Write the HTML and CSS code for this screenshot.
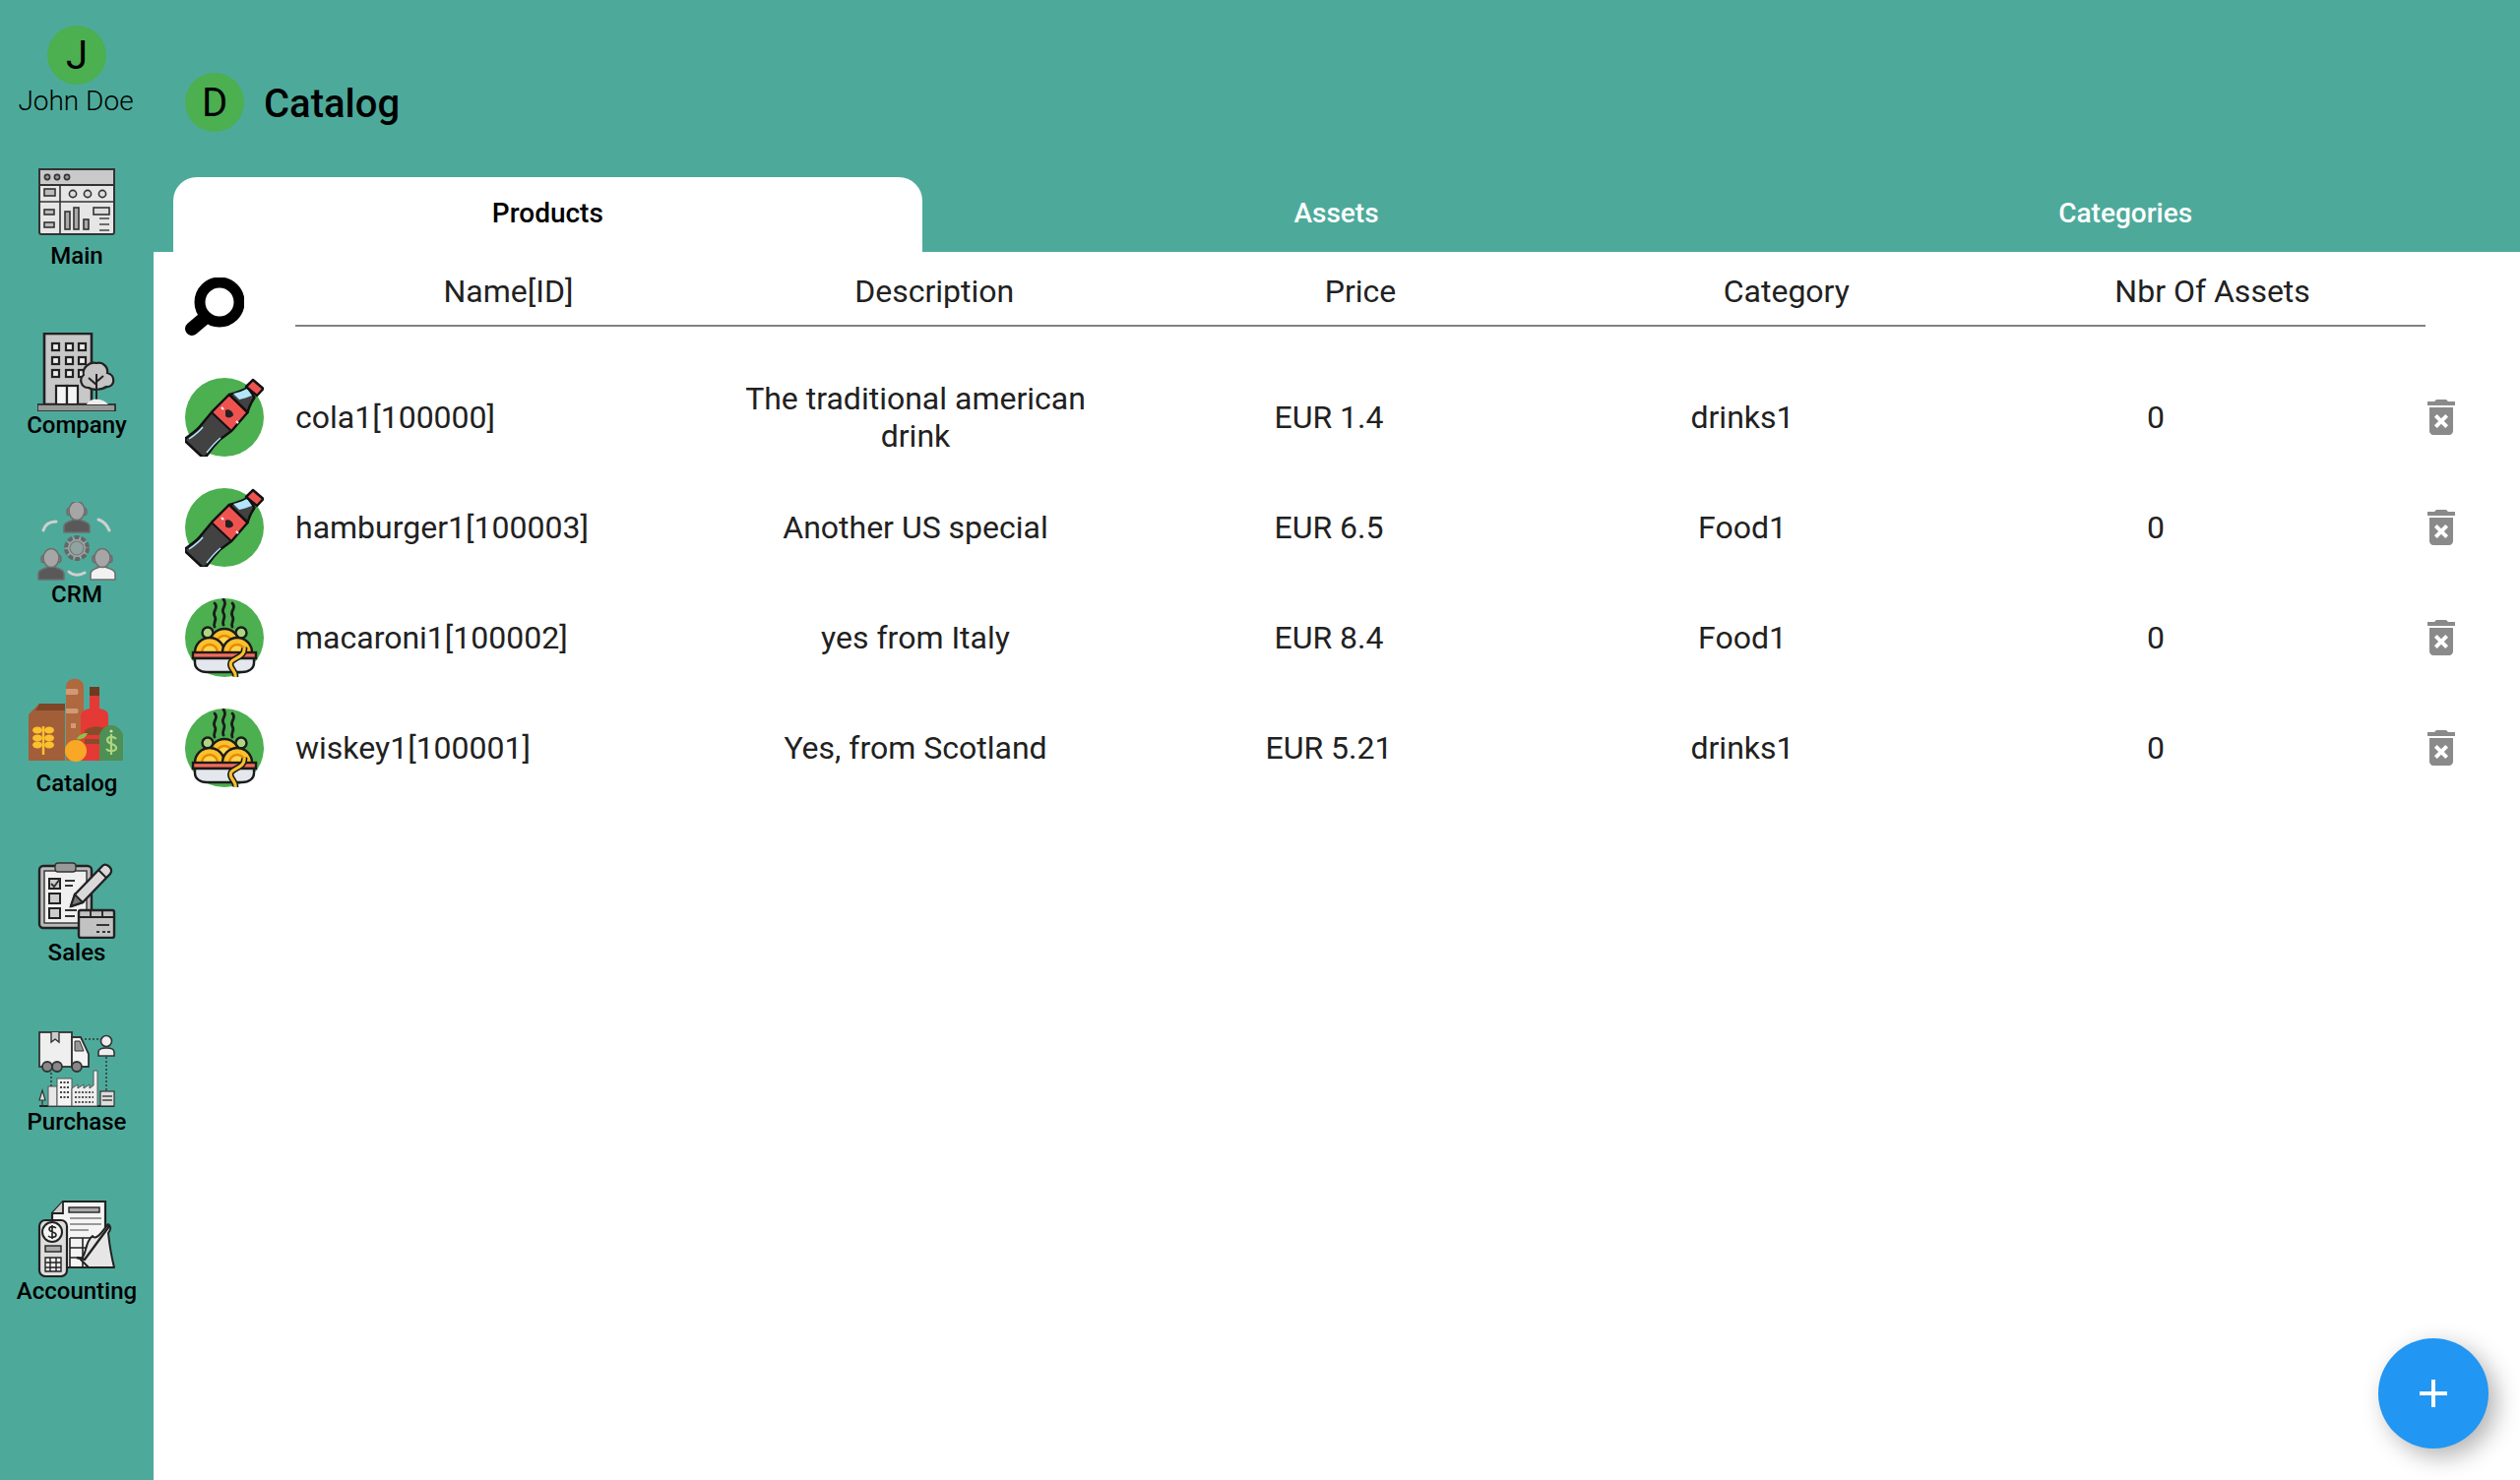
FILE: index.html
```html
<!DOCTYPE html>
<html>

<head>
	<title>Catalog</title>
	<meta charset="UTF-8">
	<link rel="stylesheet" href="styles.css">
</head>

<body>
	<svg class="defs" width="0" height="0">
		<symbol id="bottle" viewBox="0 0 80 80">
			<circle cx="40" cy="40" r="40" fill="#4caf50" />
			<path d="M1 61 C8 56 13 53 17 47 L27 35 L45 17 L63.5 35 L47 54 L35 63 C30 68 26 73 22 79 C20 81 18 81 16 79 L1 65 C0 64 0 62 1 61 Z" fill="#424242" stroke="#111" stroke-width="2.5" stroke-linejoin="round" />
			<path d="M4 62 C10 58 14 55 18 50 M22 76 C26 71 30 66 36 61" stroke="#b3e5fc" stroke-width="1.5" fill="none" />
			<path d="M27 35 L45 17 L63.5 35 L47 54 Z" fill="#ef5350" stroke="#111" stroke-width="2" stroke-linejoin="round" />
			<path d="M45 17 C52 15 58 13 63.5 10 L70.5 20 C67 25 65 30 63.5 35 Z" fill="#424242" stroke="#111" stroke-width="2.5" stroke-linejoin="round" />
			<path d="M49 16 C54 15 59 13 63 11 L68 18 C63 20 59 21 55 22 Z" fill="#b3e5fc" />
			<path d="M62 9 L69 2 L79.5 11 L73 18 Z" fill="#ef5350" stroke="#111" stroke-width="2.5" stroke-linejoin="round" />
			<path d="M41 33 C44 31 49 34 49 38 C47 41 43 41 41 39 Z" fill="#222" />
			<path d="M37 30 L39 32 M52 44 L54 46" stroke="#fff" stroke-width="2" />
		</symbol>
		<symbol id="noodles" viewBox="0 0 80 80">
			<circle cx="40" cy="40" r="40" fill="#4caf50" />
			<g fill="none" stroke="#1b1b1b" stroke-width="2.8" stroke-linecap="round">
				<path d="M30 5 C35 10 27 13 30 18 C33 22 28 25 30 29" />
				<path d="M39 1 C44 7 36 10 39 15 C42 19 37 23 39 27" />
				<path d="M48 5 C53 10 45 13 48 18 C51 22 46 25 48 29" />
			</g>
			<circle cx="23" cy="35" r="5.5" fill="#aed581" stroke="#1b1b1b" stroke-width="2.4" />
			<circle cx="57" cy="35" r="5.5" fill="#aed581" stroke="#1b1b1b" stroke-width="2.4" />
			<circle cx="40" cy="46" r="15" fill="#fbc02d" stroke="#1b1b1b" stroke-width="2.4" />
			<circle cx="40" cy="46" r="8" fill="#ffd54f" stroke="#e68a00" stroke-width="2.4" />
			<circle cx="25" cy="55" r="15" fill="#fbc02d" stroke="#1b1b1b" stroke-width="2.4" />
			<circle cx="25" cy="55" r="8" fill="#ffd54f" stroke="#e68a00" stroke-width="2.4" />
			<circle cx="53" cy="55" r="15" fill="#fbc02d" stroke="#1b1b1b" stroke-width="2.4" />
			<circle cx="53" cy="55" r="8" fill="#ffd54f" stroke="#e68a00" stroke-width="2.4" />
			<rect x="8" y="55" width="64" height="6" fill="#f26b5b" stroke="#1b1b1b" stroke-width="2.4" />
			<path d="M10 61 H70 V66 C70 71 65 75 58 75 H22 C15 75 10 71 10 66 Z" fill="#e4e8ee" stroke="#1b1b1b" stroke-width="2.4" />
			<path d="M60 50 C62 62 42 60 47 70 C49 74 52 76 51 80" fill="none" stroke="#1b1b1b" stroke-width="6.4" />
			<path d="M60 50 C62 62 42 60 47 70 C49 74 52 76 51 80" fill="none" stroke="#fbc02d" stroke-width="3.2" />
		</symbol>
		<symbol id="trash" viewBox="0 0 24 24">
			<path fill="#8a8a8a" d="M6 19c0 1.1.9 2 2 2h8c1.1 0 2-.9 2-2V7H6v12zm2.46-7.12l1.41-1.41L12 12.59l2.12-2.12 1.41 1.41L13.41 14l2.12 2.12-1.41 1.41L12 15.41l-2.12 2.12-1.41-1.41L10.59 14l-2.13-2.12zM15.5 4l-1-1h-5l-1 1H5v2h14V4z" />
		</symbol>
	</svg>

	<div class="app">
		<div class="sidebar">
			<div class="user">
				<div class="avatar">J</div>
				<div class="user-name">John Doe</div>
			</div>
			<div class="nav">
				<div class="nav-item">
					<svg class="nav-icon" viewBox="0 0 80 80">
						<rect x="2" y="6" width="76" height="66" rx="2" fill="#e6e6e6" stroke="#333" stroke-width="2" />
						<rect x="2" y="6" width="76" height="16" fill="#c9c9c9" stroke="#333" stroke-width="2" />
						<g fill="#999" stroke="#333" stroke-width="1.6">
							<circle cx="10" cy="14" r="2.6" /><circle cx="20" cy="14" r="2.6" /><circle cx="30" cy="14" r="2.6" />
							<circle cx="36" cy="31" r="3.6" fill="#ddd" /><circle cx="51" cy="31" r="3.6" fill="#ddd" /><circle cx="66" cy="31" r="3.6" fill="#ddd" />
							<rect x="7" y="26" width="11" height="7" fill="#bbb" />
							<rect x="7" y="47" width="10" height="5" fill="#bbb" />
							<rect x="7" y="60" width="10" height="5" fill="#bbb" />
							<rect x="28" y="49" width="5" height="18" fill="#aaa" />
							<rect x="37" y="45" width="5" height="22" fill="#aaa" />
							<rect x="47" y="57" width="5" height="10" fill="#aaa" />
							<rect x="57" y="45" width="16" height="7" fill="#ddd" />
						</g>
						<path d="M23 22 V72 M2 39 H78" stroke="#333" stroke-width="1.6" fill="none" />
						<path d="M63 56 H73 M63 62 H73 M63 68 H73" stroke="#444" stroke-width="1.6" />
					</svg>
					<div class="nav-label">Main</div>
				</div>
				<div class="nav-item">
					<svg class="nav-icon" viewBox="0 0 80 80">
						<rect x="7" y="1" width="48" height="72" fill="#c8c8c8" stroke="#222" stroke-width="2.6" />
						<g fill="#eee" stroke="#222" stroke-width="2.2">
							<rect x="15" y="11" width="7" height="7" /><rect x="29" y="11" width="7" height="7" /><rect x="42" y="11" width="7" height="7" />
							<rect x="15" y="25" width="7" height="7" /><rect x="29" y="25" width="7" height="7" /><rect x="42" y="25" width="7" height="7" />
							<rect x="15" y="38" width="7" height="7" /><rect x="29" y="38" width="7" height="7" /><rect x="42" y="38" width="7" height="7" />
							<rect x="19" y="54" width="11" height="19" fill="#f4f4f4" /><rect x="30" y="54" width="11" height="19" fill="#f4f4f4" />
						</g>
						<path d="M52 56 C44 56 42 47 47 43 C45 36 53 29 60 31 C67 29 72 36 71 41 C80 43 79 56 70 55 C66 58 56 59 52 56 Z" fill="#c4c4c4" stroke="#222" stroke-width="2.2" />
						<path d="M60 70 V42 M60 53 L52 46 M60 50 L67 44" fill="none" stroke="#222" stroke-width="2" />
						<rect x="0" y="73" width="79" height="7" fill="#9a9a9a" stroke="#222" stroke-width="1.6" />
						<path d="M50 73 C53 66 66 66 72 73 Z" fill="#eee" />
					</svg>
					<div class="nav-label">Company</div>
				</div>
				<div class="nav-item">
					<svg class="nav-icon" viewBox="0 0 80 80">
						<g stroke="#6e6e6e" stroke-width="1.6">
							<path d="M27 31 V25 C27 20 34 20 37 18 H43 C46 20 53 20 53 25 V31 Z" fill="#595959" />
							<ellipse cx="32" cy="10" rx="2" ry="3.5" fill="#888" />
							<ellipse cx="48" cy="10" rx="2" ry="3.5" fill="#888" />
							<ellipse cx="40" cy="9" rx="8" ry="9.5" fill="#a6a6a6" />
							<path d="M1 79 V73 C1 68 8 68 11 66 H17 C20 68 27 68 27 73 V79 Z" fill="#595959" />
							<ellipse cx="6" cy="58" rx="2" ry="3.5" fill="#888" />
							<ellipse cx="22" cy="58" rx="2" ry="3.5" fill="#888" />
							<ellipse cx="14" cy="57" rx="8" ry="9.5" fill="#a6a6a6" />
							<path d="M54 79 V73 C54 68 60 68 63 66 H69 C72 68 79 68 79 73 V79 Z" fill="#f2f2f2" />
							<ellipse cx="58" cy="58" rx="2" ry="3.5" fill="#888" />
							<ellipse cx="74" cy="58" rx="2" ry="3.5" fill="#888" />
							<ellipse cx="66" cy="57" rx="8" ry="9.5" fill="#a6a6a6" />
						</g>
						<circle cx="40" cy="47" r="11" fill="#9aa8a5" stroke="#666" stroke-width="4" stroke-dasharray="5 2" />
						<circle cx="40" cy="47" r="7" fill="#8fa3a0" stroke="#777" stroke-width="1.2" />
						<g fill="none" stroke="#cfcfcf" stroke-width="3" stroke-linecap="round">
							<path d="M6 29 C8 22 14 20 19 20" />
							<path d="M62 18 C68 20 71 24 73 29" />
							<path d="M32 71 C36 75 43 75 48 72" />
						</g>
					</svg>
					<div class="nav-label">CRM</div>
				</div>
				<div class="nav-item">
					<svg class="nav-icon nav-icon-big" viewBox="0 0 100 100">
						<path d="M39 91 V16 C39 5 57 5 57 16 V91 Z" fill="#b0683f" />
						<path d="M39 18 H50 C52 18 52 24 50 24 H39 Z M39 38 H50 C52 38 52 43 50 43 H39 Z M44 53 H49 V58 H44 Z" fill="#d19a76" />
						<rect x="63" y="16" width="10" height="9" fill="#6d3b22" />
						<path d="M63 25 H73 V38 C79 39 82 41 82 46 V91 H54 V46 C54 41 58 39 63 38 Z" fill="#e53935" />
						<path d="M12 33 H38 V91 H1 V44 Z" fill="#a15e38" />
						<path d="M12 33 H38 L38 40 H8 Z" fill="#7e4526" />
						<path d="M16 85 V56" stroke="#fbc02d" stroke-width="2.5" />
						<g fill="#fbc02d">
							<ellipse cx="10" cy="60" rx="5" ry="3.5" /><ellipse cx="22" cy="60" rx="5" ry="3.5" />
							<ellipse cx="10" cy="68" rx="5" ry="3.5" /><ellipse cx="22" cy="68" rx="5" ry="3.5" />
							<ellipse cx="10" cy="75" rx="5" ry="3.5" /><ellipse cx="22" cy="75" rx="5" ry="3.5" />
						</g>
						<path d="M58 61 C62 55 78 55 82 61 V65 H58 Z M58 69 H82 V74 H58 Z" fill="#8a4b2a" />
						<path d="M73 91 V64 C76 58 80 55 85 55 C90 55 94 58 97 64 V91 Z" fill="#4e8f55" />
						<circle cx="85" cy="61" r="1.6" fill="#c5e1a5" />
						<path d="M90 69 C88 66 81 66 81 70 C81 75 90 73 90 78 C90 82 82 82 80 79 M85 64 V85" fill="none" stroke="#aed581" stroke-width="2.2" />
						<circle cx="49" cy="81" r="11" fill="#f9a825" />
						<path d="M50 69 C52 64 57 63 61 63 C59 68 55 70 50 69 Z" fill="#8bc34a" />
					</svg>
					<div class="nav-label">Catalog</div>
				</div>
				<div class="nav-item">
					<svg class="nav-icon" viewBox="0 0 80 80">
						<rect x="2" y="6" width="53" height="63" rx="4" fill="#bbb" stroke="#222" stroke-width="2.4" />
						<rect x="7" y="11" width="43" height="53" fill="#f0f0f0" stroke="#333" stroke-width="1.4" />
						<rect x="18" y="3" width="21" height="9" rx="3" fill="#999" stroke="#333" stroke-width="1.4" />
						<g fill="#ccc" stroke="#222" stroke-width="2">
							<rect x="12" y="19" width="11" height="10" /><rect x="12" y="34" width="11" height="10" /><rect x="12" y="49" width="11" height="10" />
						</g>
						<path d="M14 24 L17 27 L23 19 M28 21 H38 M28 26 H36 M28 51 H40 M28 57 H38" fill="none" stroke="#333" stroke-width="2" />
						<path d="M34 47 L38 35 L66 6 C70 2 78 9 74 14 L46 43 Z" fill="#d9d9d9" stroke="#222" stroke-width="2.4" stroke-linejoin="round" />
						<path d="M34 47 L38 35 L46 43 Z M62 10 L70 18" fill="#777" stroke="#222" stroke-width="2" />
						<rect x="42" y="51" width="36" height="28" rx="2" fill="#c2c2c2" stroke="#222" stroke-width="2.4" />
						<path d="M42 58 H78 M54 51 V58 H66 V51" fill="none" stroke="#222" stroke-width="1.8" />
						<path d="M60 66 H73 M60 73 H63 M66 73 H69 M71 73 H74" stroke="#333" stroke-width="1.8" />
					</svg>
					<div class="nav-label">Sales</div>
				</div>
				<div class="nav-item">
					<svg class="nav-icon" viewBox="0 0 80 80">
						<rect x="2" y="3" width="33" height="35" fill="#efefef" stroke="#333" stroke-width="1.8" />
						<path d="M35 8 H44 L52 25 V38 H35 Z" fill="#f4f4f4" stroke="#333" stroke-width="1.8" />
						<path d="M38 12 H43 L47 22 H38 Z" fill="#999" stroke="#333" stroke-width="1" />
						<path d="M14 3 V13 L18 10 L22 13 V3" fill="#ccc" stroke="#333" stroke-width="1.4" />
						<g fill="#888" stroke="#333" stroke-width="1.8">
							<circle cx="10" cy="38" r="5" /><circle cx="20" cy="38" r="5" /><circle cx="40" cy="38" r="5" />
						</g>
						<path d="M44 10 H66 M70 28 V66 M14 44 V62" fill="none" stroke="#333" stroke-width="1.5" stroke-dasharray="2 2" />
						<circle cx="70" cy="12" r="5.5" fill="#eee" stroke="#333" stroke-width="1.6" />
						<path d="M62 27 V23 C62 20 66 19 70 19 C74 19 78 20 78 23 V27 Z" fill="#eee" stroke="#333" stroke-width="1.6" />
						<path d="M2 78 H78" stroke="#222" stroke-width="1.8" />
						<path d="M5 62 L8 72 H2 Z M5 72 V78" fill="#ddd" stroke="#333" stroke-width="1.2" />
						<rect x="11" y="58" width="9" height="20" fill="#e8e8e8" stroke="#555" stroke-width="1" />
						<rect x="20" y="50" width="15" height="28" fill="#f4f4f4" stroke="#555" stroke-width="1" />
						<path d="M23 54 H32 M23 59 H32 M23 64 H32 M23 69 H32" stroke="#444" stroke-width="1.8" stroke-dasharray="2 1.5" />
						<path d="M35 78 V60 L41 56 V60 L47 56 V60 L53 56 V60 L57 57 V42 H61 V78 Z" fill="#eee" stroke="#555" stroke-width="1" />
						<path d="M38 64 H57 M38 69 H57 M38 74 H57" stroke="#555" stroke-width="1.8" stroke-dasharray="2 1.5" />
						<rect x="64" y="63" width="14" height="15" fill="#ddd" stroke="#333" stroke-width="1.2" />
						<path d="M66 68 H76 M66 72 H76" stroke="#444" stroke-width="1.4" />
					</svg>
					<div class="nav-label">Purchase</div>
				</div>
				<div class="nav-item">
					<svg class="nav-icon" viewBox="0 0 80 80">
						<path d="M26 3 H69 V70 H15 V15 Z" fill="#f4f4f4" stroke="#222" stroke-width="2.2" />
						<path d="M26 3 V15 H15" fill="#ccc" stroke="#222" stroke-width="1.8" />
						<rect x="32" y="9" width="31" height="5" fill="#aaa" stroke="#222" stroke-width="1.4" />
						<path d="M33 20 H65 M33 26 H65 M33 32 H52" stroke="#999" stroke-width="2" />
						<path d="M33 40 H60 V70 M33 40 V70 M33 50 H60 M33 60 H60 M46 40 V70" fill="none" stroke="#222" stroke-width="1.6" />
						<rect x="2" y="22" width="28" height="57" rx="6" fill="#ddd" stroke="#222" stroke-width="2.2" />
						<circle cx="15" cy="34" r="10" fill="#f4f4f4" stroke="#222" stroke-width="2" />
						<path d="M19 30 C17 28 12 28 12 31 C12 35 19 33 19 37 C19 40 13 40 11 38 M15 27 V41" fill="none" stroke="#222" stroke-width="1.6" />
						<rect x="8" y="48" width="16" height="6" fill="#aaa" stroke="#222" stroke-width="1.4" />
						<path d="M8 60 H24 V74 H8 Z M13 60 V74 M19 60 V74 M8 65 H24 M8 70 H24" fill="#eee" stroke="#222" stroke-width="1.4" />
						<path d="M44 62 C50 58 48 44 56 38 C60 44 68 30 72 26 C75 28 75 31 72 35 C73 45 75 58 78 70 H52 Z" fill="#e6e6e6" stroke="#222" stroke-width="2" stroke-linejoin="round" />
						<path d="M40 60 L48 62 L73 28" fill="none" stroke="#222" stroke-width="2.4" />
					</svg>
					<div class="nav-label">Accounting</div>
				</div>
			</div>
		</div>

		<div class="main">
			<div class="header">
				<div class="avatar">D</div>
				<div class="title">Catalog</div>
			</div>
			<div class="tabs">
				<div class="tab active">Products</div>
				<div class="tab">Assets</div>
				<div class="tab">Categories</div>
			</div>
			<div class="content">
				<div class="head-row">
					<svg class="search" viewBox="0 0 60 60">
						<circle cx="35" cy="25" r="20" fill="none" stroke="#000" stroke-width="11" />
						<path d="M20 41 L7 52" stroke="#000" stroke-width="14" stroke-linecap="round" />
					</svg>
					<div class="head-cols">
						<div>Name[ID]</div>
						<div>Description</div>
						<div>Price</div>
						<div>Category</div>
						<div>Nbr Of Assets</div>
					</div>
				</div>
				<div class="rows">
					<div class="row">
						<svg class="thumb"><use href="#bottle" /></svg>
						<div class="name">cola1[100000]</div>
						<div class="desc">The traditional american drink</div>
						<div>EUR 1.4</div>
						<div>drinks1</div>
						<div>0</div>
						<svg class="trash"><use href="#trash" /></svg>
					</div>
					<div class="row">
						<svg class="thumb"><use href="#bottle" /></svg>
						<div class="name">hamburger1[100003]</div>
						<div class="desc">Another US special</div>
						<div>EUR 6.5</div>
						<div>Food1</div>
						<div>0</div>
						<svg class="trash"><use href="#trash" /></svg>
					</div>
					<div class="row">
						<svg class="thumb"><use href="#noodles" /></svg>
						<div class="name">macaroni1[100002]</div>
						<div class="desc">yes from Italy</div>
						<div>EUR 8.4</div>
						<div>Food1</div>
						<div>0</div>
						<svg class="trash"><use href="#trash" /></svg>
					</div>
					<div class="row">
						<svg class="thumb"><use href="#noodles" /></svg>
						<div class="name">wiskey1[100001]</div>
						<div class="desc">Yes, from Scotland</div>
						<div>EUR 5.21</div>
						<div>drinks1</div>
						<div>0</div>
						<svg class="trash"><use href="#trash" /></svg>
					</div>
				</div>
				<div class="fab">
					<svg viewBox="0 0 28 28" width="28" height="28">
						<path d="M12 0 H16 V12 H28 V16 H16 V28 H12 V16 H0 V12 H12 Z" fill="#fff" />
					</svg>
				</div>
			</div>
		</div>
	</div>
</body>

</html>
```

FILE: styles.css
```css
* {
	box-sizing: border-box;
}

html,
body {
	margin: 0;
	height: 100%;
	overflow: hidden;
	font-family: Roboto, "Noto Sans", sans-serif;
	color: #212121;
}

.defs {
	position: absolute;
}

.app {
	display: flex;
	height: 1504px;
	background: #4daa9b;
}

.sidebar {
	width: 156px;
	flex-shrink: 0;
	display: flex;
	flex-direction: column;
	align-items: center;
	padding-top: 26px;
}

.user {
	display: flex;
	flex-direction: column;
	align-items: center;
	height: 140px;
}

.avatar {
	width: 60px;
	height: 60px;
	flex-shrink: 0;
	border-radius: 50%;
	background: #4caf50;
	color: #000;
	font-size: 40px;
	font-weight: 400;
	display: flex;
	align-items: center;
	justify-content: center;
}

.user-name {
	font-size: 28px;
	font-weight: 300;
	line-height: 33px;
	white-space: nowrap;
	color: #000;
	margin-left: -2px;
}

.nav {
	display: flex;
	flex-direction: column;
	align-items: center;
	gap: 64px;
}

.nav-item {
	display: flex;
	flex-direction: column;
	align-items: center;
}

.nav-icon {
	width: 80px;
	height: 80px;
	display: block;
}

.nav-icon-big {
	width: 100px;
	height: 100px;
}

.nav-label {
	font-size: 24px;
	font-weight: 500;
	line-height: 28px;
	color: #000;
	white-space: nowrap;
}

.main {
	flex: 1;
	min-width: 0;
	display: flex;
	flex-direction: column;
}

.header {
	height: 180px;
	padding: 74px 0 0 32px;
	display: flex;
	align-items: flex-start;
	gap: 20px;
}

.title {
	font-size: 40px;
	font-weight: 500;
	line-height: 63px;
	color: #000;
}

.tabs {
	height: 76px;
	display: grid;
	grid-template-columns: repeat(3, 1fr);
	margin-left: -1px;
}

.tab {
	display: flex;
	align-items: center;
	justify-content: center;
	font-size: 28px;
	font-weight: 500;
	color: #fff;
	padding-bottom: 3px;
}

.tab.active {
	margin: 0 20px 0 21px;
	background: #fff;
	color: #000;
	border-radius: 24px 24px 0 0;
}

.content {
	flex: 1;
	background: #fff;
	position: relative;
}

.head-row {
	display: flex;
	padding: 0 96px 0 32px;
	height: 112px;
}

.search {
	width: 60px;
	height: 60px;
	margin-top: 26px;
	margin-right: 52px;
	flex-shrink: 0;
}

.head-cols {
	flex: 1;
	height: 76px;
	padding-top: 2px;
	border-bottom: 2px solid #808080;
	display: grid;
	grid-template-columns: repeat(5, 1fr);
	font-size: 32px;
	line-height: 76px;
	text-align: center;
}

.row {
	height: 112px;
	padding-left: 32px;
	display: grid;
	grid-template-columns: 80px 32px repeat(5, 420px) 56px 48px;
	align-items: center;
	font-size: 32px;
	line-height: 38px;
	text-align: center;
}

.thumb {
	width: 80px;
	height: 80px;
	grid-column: 1;
}

.row .name {
	grid-column: 3;
	text-align: left;
}

.trash {
	grid-column: 9;
	width: 48px;
	height: 48px;
}

.fab {
	position: absolute;
	right: 32px;
	bottom: 32px;
	width: 112px;
	height: 112px;
	border-radius: 50%;
	background: #2196f3;
	box-shadow: 8px 8px 24px rgba(0, 0, 0, 0.3);
	display: flex;
	align-items: center;
	justify-content: center;
}
```
